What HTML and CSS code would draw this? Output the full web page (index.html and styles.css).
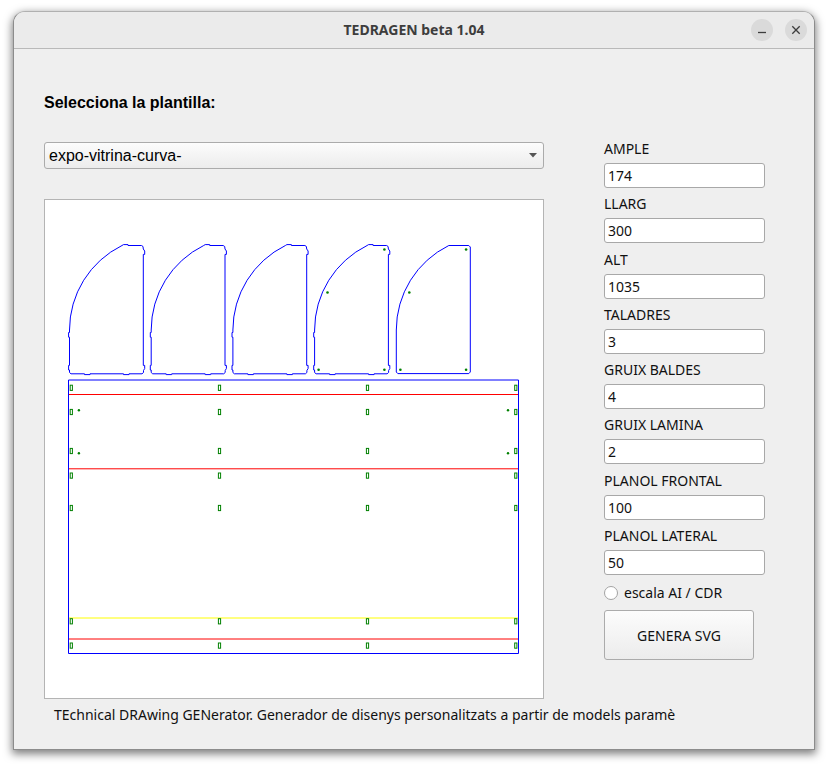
FILE: index.html
```html
<!DOCTYPE html>
<html lang="ca">
<head>
<meta charset="utf-8">
<meta name="viewport" content="width=device-width, initial-scale=1">
<title>TEDRAGEN beta 1.04</title>
<link rel="stylesheet" href="styles.css">
</head>
<body>
<div class="window">
  <header class="titlebar">
    <h1 class="title">TEDRAGEN beta 1.04</h1>
    <div class="controls">
      <button class="control" type="button" aria-label="Minimitza"><svg width="22" height="22" viewBox="0 0 22 22"><path d="M7 13.5h8"/></svg></button>
      <button class="control" type="button" aria-label="Tanca"><svg width="22" height="22" viewBox="0 0 22 22"><path d="M7.3 7.3l7.4 7.4M14.7 7.3l-7.4 7.4"/></svg></button>
    </div>
  </header>
  <form class="content">
    <section class="template">
      <label class="heading" for="plantilla">Selecciona la plantilla:</label>
      <div class="picker">
        <select id="plantilla"><option>expo-vitrina-curva-</option></select>
        <svg class="arrow" width="8" height="5" viewBox="0 0 8 5"><path d="M0 0h8L4 4.5z"/></svg>
      </div>
      <svg class="preview" viewBox="0 0 498 498" role="img" aria-label="Previsualització">
        <defs>
          <path id="side" d="M.5 85A94.2 94.2 0 0 1 53 .5L54.5-.4H59V.5H72.5L74 1.5L74.3 4L75.7 6V9.4H74.3V120.4H75.7V123.5L74.5 125.5V127.5L73 128.8H60V129.6H54.5V128.8H21V129.6H15.5V128.8H2L.5 127.5V125H-.4V120.4H.5V92.2H-.4V87.5H.5Z"/>
          <path id="plain" d="M.5 85A94.2 94.2 0 0 1 53 .5H73L74.5 2V127L73 128.6H2L.5 127Z"/>
          <g id="holes">
            <rect x="25.2" y="-2.6" width="2.2" height="5.2"/>
            <rect x="173.4" y="-2.6" width="2.2" height="5.2"/>
            <rect x="321.4" y="-2.6" width="2.2" height="5.2"/>
            <rect x="469.7" y="-2.6" width="2.2" height="5.2"/>
          </g>
        </defs>
        <g class="blue">
          <use href="#side" x="24" y="45"/>
          <use href="#side" x="105.7" y="45"/>
          <use href="#side" x="187.4" y="45"/>
          <use href="#side" x="269.1" y="45"/>
          <use href="#plain" x="350.8" y="45"/>
        </g>
        <path class="red" d="M24 194.5H473M24 268.8H473M24 439H473"/>
        <path class="yellow" d="M24 418H473"/>
        <path class="blue" d="M23.5 180H473.5V453.5H23.5Z"/>
        <g class="green">
          <use href="#holes" y="187.8"/>
          <use href="#holes" y="212"/>
          <use href="#holes" y="251"/>
          <use href="#holes" y="275.6"/>
          <use href="#holes" y="308"/>
          <use href="#holes" y="421.3"/>
          <use href="#holes" y="445.6"/>
        </g>
        <g class="drill">
          <circle cx="339.4" cy="49.5" r="1.3"/><circle cx="282.5" cy="92.5" r="1.3"/><circle cx="273.6" cy="169.7" r="1.3"/><circle cx="339.4" cy="169.7" r="1.3"/>
          <circle cx="421.1" cy="49.5" r="1.3"/><circle cx="364.3" cy="92.5" r="1.3"/><circle cx="355.4" cy="169.7" r="1.3"/><circle cx="421.1" cy="169.7" r="1.3"/>
          <circle cx="33.9" cy="210.2" r="1.2"/><circle cx="33.9" cy="253.2" r="1.2"/><circle cx="463" cy="210.2" r="1.2"/><circle cx="463" cy="253.2" r="1.2"/>
        </g>
      </svg>
    </section>
    <section class="settings">
      <div class="fields">
        <div class="field"><label for="ample">AMPLE</label><input id="ample" type="text" value="174"></div>
        <div class="field"><label for="llarg">LLARG</label><input id="llarg" type="text" value="300"></div>
        <div class="field"><label for="alt">ALT</label><input id="alt" type="text" value="1035"></div>
        <div class="field"><label for="taladres">TALADRES</label><input id="taladres" type="text" value="3"></div>
        <div class="field"><label for="baldes">GRUIX BALDES</label><input id="baldes" type="text" value="4"></div>
        <div class="field"><label for="lamina">GRUIX LAMINA</label><input id="lamina" type="text" value="2"></div>
        <div class="field"><label for="frontal">PLANOL FRONTAL</label><input id="frontal" type="text" value="100"></div>
        <div class="field"><label for="lateral">PLANOL LATERAL</label><input id="lateral" type="text" value="50"></div>
      </div>
      <label class="scale"><input type="radio" name="escala">escala AI / CDR</label>
      <button class="generate" type="button">GENERA SVG</button>
    </section>
  </form>
  <footer class="status">TEchnical DRAwing GENerator. Generador de disenys personalitzats a partir de models paramè</footer>
</div>
</body>
</html>
```
FILE: styles.css
```css
* {
  box-sizing: border-box;
}

body {
  margin: 0;
  padding: 11px 13px 16px;
  background: #fff;
  color: #111;
  font: 14px/20px "Noto Sans", sans-serif;
}

.window {
  min-height: calc(100vh - 27px);
  border: 1px solid #8c8c8c;
  border-top-color: #b0b0b0;
  border-radius: 12px 12px 0 0;
  background: #efefef;
  box-shadow: 0 3px 9px 1px rgba(0, 0, 0, 0.5);
}

.titlebar {
  display: grid;
  grid-template-columns: 1fr auto 1fr;
  align-items: center;
  height: 37px;
  padding: 0 7px;
  border-bottom: 1px solid #b9b9b9;
  border-radius: 11px 11px 0 0;
  background: #ebebeb;
}

.title {
  grid-column: 2;
  margin: 0;
  color: #3d3d3d;
  font-size: 14px;
  font-weight: 700;
}

.controls {
  display: flex;
  justify-content: flex-end;
  gap: 12px;
}

.control {
  width: 22px;
  height: 22px;
  padding: 0;
  border: 0;
  border-radius: 50%;
  background: #dadada;
}

.control svg {
  display: block;
  fill: none;
  stroke: #3d3d3d;
  stroke-width: 1.3;
}

.content {
  display: grid;
  grid-template-columns: minmax(0, 1fr) 161px;
  gap: 60px;
  padding: 42px 49px 0 30px;
}

.heading {
  display: block;
  color: #000;
  font: bold 16px/24px "Liberation Sans", sans-serif;
}

.picker {
  display: grid;
  align-items: center;
  margin: 27px 0 30px;
}

.picker > * {
  grid-area: 1 / 1;
}

.picker select {
  width: 100%;
  height: 27px;
  padding: 0 4px;
  border: 1px solid #ababab;
  border-radius: 3px;
  appearance: none;
  background: linear-gradient(#fcfcfc, #ececec);
  color: #000;
  font: 16px/24px "Liberation Sans", sans-serif;
}

.arrow {
  justify-self: end;
  margin-right: 7px;
  fill: #555;
  pointer-events: none;
}

.preview {
  display: block;
  width: 100%;
  border: 1px solid #b4b4b4;
  background: #fff;
  fill: none;
  stroke-width: 1;
}

.blue {
  stroke: #00f;
}

.red {
  stroke: #f00;
}

.yellow {
  stroke: #ff0;
}

.green {
  stroke: #008000;
}

.drill {
  fill: #008000;
}

.settings {
  padding-top: 43px;
}

.fields {
  display: grid;
  grid-auto-rows: 1fr;
  height: 442px;
}

.field label {
  display: block;
  padding-top: 5px;
  line-height: 20px;
}

.field input {
  display: block;
  width: 100%;
  height: 25px;
  margin-top: 4px;
  padding: 0 3px;
  border: 1px solid #a8a8a8;
  border-radius: 3px;
  background: #fff;
  color: #111;
  font: inherit;
}

.scale {
  display: flex;
  align-items: center;
  gap: 6px;
  height: 20px;
  margin-top: 7px;
}

.scale input {
  width: 14px;
  height: 14px;
  margin: 0;
  border: 1px solid #a3a3a3;
  border-radius: 50%;
  appearance: none;
  background: #fff;
}

.scale input:checked {
  background: radial-gradient(#444 35%, #fff 40%);
}

.generate {
  display: block;
  width: 150px;
  height: 50px;
  margin-top: 7px;
  padding-top: 3px;
  border: 1px solid #ababab;
  border-radius: 3px;
  background: linear-gradient(#fcfcfc, #ececec);
  color: #111;
  font: inherit;
}

.status {
  padding: 6px 40px 24px;
}
```
